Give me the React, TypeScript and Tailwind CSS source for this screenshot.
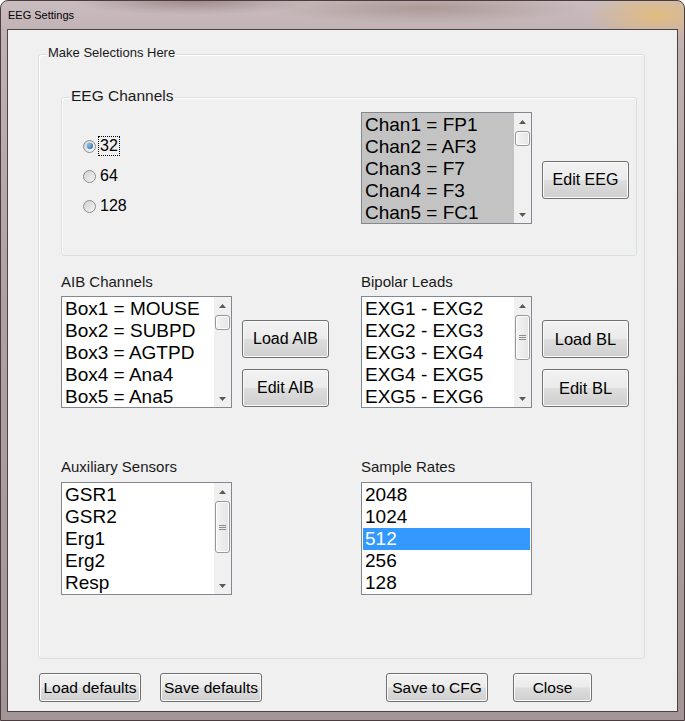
import React from "react";

type Scroll = { thumb: number; grip?: boolean };

const UpArrow = () => (
  <svg width="7" height="4" viewBox="0 0 7 4">
    <polygon points="0,4 3.5,0 7,4" fill="#5a5a5a" />
  </svg>
);

const DownArrow = () => (
  <svg width="7" height="4" viewBox="0 0 7 4">
    <polygon points="0,0 7,0 3.5,4" fill="#5a5a5a" />
  </svg>
);

const ScrollBar = ({ thumb, grip }: Scroll) => (
  <div className="w-[17px] flex flex-col bg-[#f0f0f0]">
    <div className="h-[17px] flex items-center justify-center">
      <UpArrow />
    </div>
    <div className="flex-1">
      <div
        className="ml-[1px] mt-[1px] w-[15px] rounded-[3px] border border-[#979797] bg-[linear-gradient(90deg,#f4f4f4,#e4e4e4)] shadow-[inset_0_0_0_1px_#ffffff] flex flex-col items-center justify-center gap-[1px]"
        style={{ height: thumb }}
      >
        {grip && (
          <>
            <div className="w-[7px] h-[1px] bg-[#8c8c8c]" />
            <div className="w-[7px] h-[1px] bg-[#8c8c8c]" />
            <div className="w-[7px] h-[1px] bg-[#8c8c8c]" />
          </>
        )}
      </div>
    </div>
    <div className="h-[17px] flex items-center justify-center">
      <DownArrow />
    </div>
  </div>
);

type ListProps = {
  items: string[];
  gray?: boolean;
  selected?: number;
  scroll?: Scroll;
  tall?: boolean;
};

const ListBox = ({ items, gray, selected, scroll, tall }: ListProps) => (
  <div
    className={`w-[171px] ${tall ? "h-[113px]" : "h-[112px]"} border border-[#828790] flex ${
      gray ? "bg-[#c3c3c3]" : "bg-white"
    }`}
  >
    <div className="flex-1 overflow-hidden pt-[1px] px-[1px]">
      {items.map((it, i) => (
        <div
          key={it}
          className={`h-[22px] leading-[22px] pl-[2px] text-[19px] whitespace-nowrap ${
            i === selected ? "bg-[#3399ff] text-white" : "text-black"
          }`}
        >
          {it}
        </div>
      ))}
    </div>
    {scroll && <ScrollBar thumb={scroll.thumb} grip={scroll.grip} />}
  </div>
);

const Button = ({ label, className }: { label: string; className: string }) => (
  <button
    className={`${className} rounded-[3px] border border-[#707070] bg-[linear-gradient(180deg,#f2f2f2_0%,#ebebeb_48%,#dddddd_52%,#cfcfcf_100%)] shadow-[inset_0_0_0_1px_#fbfbfb] text-black flex items-center justify-center whitespace-nowrap`}
  >
    {label}
  </button>
);

const Radio = ({ label, checked }: { label: string; checked?: boolean }) => (
  <div className="h-[30px] flex items-center">
    <div className="w-[13px] h-[13px] rounded-full border border-[#8e8f8f] bg-[linear-gradient(135deg,#cfcfcf,#f7f7f7)] flex items-center justify-center">
      {checked && (
        <div className="w-[6px] h-[6px] rounded-full bg-[radial-gradient(circle_at_35%_35%,#7fc2f0,#1d5f96)]" />
      )}
    </div>
    <span
      className={`ml-[2px] px-[1px] text-[16px] leading-[18px] border ${
        checked ? "border-dotted border-black" : "border-transparent"
      }`}
    >
      {label}
    </span>
  </div>
);

const Caption = ({ text }: { text: string }) => (
  <div className="h-[17px] leading-[17px] text-[15px] text-[#1a1a1a] whitespace-nowrap">{text}</div>
);

export default function App() {
  return (
    <div className="w-[685px] h-[721px] flex flex-col rounded-t-[8px] border border-[#4a3c3f] font-['Liberation_Sans',Arial,sans-serif] bg-[radial-gradient(ellipse_70px_26px_at_96%_2%,#e2bb7e,transparent),radial-gradient(ellipse_120px_14px_at_28%_0%,#a08c8c,transparent),radial-gradient(ellipse_160px_16px_at_62%_1%,#ad9a98,transparent),linear-gradient(180deg,#cabdbf_0%,#c0b1b3_5%,#b0a1a3_40%,#a39496_100%)]">
      <div className="h-[28px] flex items-center pl-[7px] text-[11px] text-black">EEG Settings</div>

      <div className="mx-[6px] mb-[8px] flex-1 border border-[#4d4244] bg-[#f0f0f0] flex flex-col">
        <div className="ml-[30px] mt-[24px] w-[607px] h-[605px] border border-[#d9dfe3] rounded-[3px] shadow-[inset_1px_1px_0_#ffffff] relative pl-[22px] pt-[42px]">
          <span className="absolute left-[8px] -top-[10px] px-[1px] bg-[#f0f0f0] text-[13px] leading-[16px] text-[#1a1a1a]">
            Make Selections Here
          </span>

          <div className="w-[576px] h-[159px] border border-[#d9dfe3] rounded-[3px] shadow-[inset_1px_1px_0_#ffffff] relative flex items-start">
            <span className="absolute left-[8px] -top-[11px] px-[1px] bg-[#f0f0f0] text-[15.5px] leading-[18px] text-[#1a1a1a]">
              EEG Channels
            </span>
            <div className="ml-[21px] mt-[33px] w-[278px] flex flex-col">
              <Radio label="32" checked />
              <Radio label="64" />
              <Radio label="128" />
            </div>
            <div className="mt-[14px]">
              <ListBox
                gray
                items={["Chan1 = FP1", "Chan2 = AF3", "Chan3 = F7", "Chan4 = F3", "Chan5 = FC1"]}
                scroll={{ thumb: 15 }}
              />
            </div>
            <Button label="Edit EEG" className="ml-[10px] mt-[63px] w-[87px] h-[38px] text-[16px]" />
          </div>

          <div className="mt-[17px] flex">
            <div className="w-[300px] flex flex-col">
              <Caption text="AIB Channels" />
              <div className="mt-[6px] flex items-start">
                <ListBox
                  items={["Box1 = MOUSE", "Box2 = SUBPD", "Box3 = AGTPD", "Box4 = Ana4", "Box5 = Ana5"]}
                  scroll={{ thumb: 15 }}
                />
                <div className="ml-[10px] mt-[24px] flex flex-col gap-[11px]">
                  <Button label="Load AIB" className="w-[87px] h-[38px] text-[16px]" />
                  <Button label="Edit AIB" className="w-[87px] h-[38px] text-[16px]" />
                </div>
              </div>
            </div>
            <div className="w-[276px] flex flex-col">
              <Caption text="Bipolar Leads" />
              <div className="mt-[6px] flex items-start">
                <ListBox
                  items={["EXG1 - EXG2", "EXG2 - EXG3", "EXG3 - EXG4", "EXG4 - EXG5", "EXG5 - EXG6"]}
                  scroll={{ thumb: 45, grip: true }}
                />
                <div className="ml-[10px] mt-[24px] flex flex-col gap-[11px]">
                  <Button label="Load BL" className="w-[87px] h-[38px] text-[16.5px]" />
                  <Button label="Edit BL" className="w-[87px] h-[38px] text-[16.5px]" />
                </div>
              </div>
            </div>
          </div>

          <div className="mt-[50px] flex">
            <div className="w-[300px] flex flex-col">
              <Caption text="Auxiliary Sensors" />
              <div className="mt-[7px]">
                <ListBox tall items={["GSR1", "GSR2", "Erg1", "Erg2", "Resp"]} scroll={{ thumb: 52, grip: true }} />
              </div>
            </div>
            <div className="w-[276px] flex flex-col">
              <Caption text="Sample Rates" />
              <div className="mt-[7px]">
                <ListBox tall items={["2048", "1024", "512", "256", "128"]} selected={2} />
              </div>
            </div>
          </div>
        </div>

        <div className="mt-[14px] ml-[31px] flex">
          <Button label="Load defaults" className="w-[102px] h-[29px] text-[15.5px]" />
          <Button label="Save defaults" className="ml-[19px] w-[102px] h-[29px] text-[15.5px]" />
          <Button label="Save to CFG" className="ml-[124px] w-[102px] h-[29px] text-[15.5px]" />
          <Button label="Close" className="ml-[25px] w-[79px] h-[29px] text-[15.5px]" />
        </div>
      </div>
    </div>
  );
}
